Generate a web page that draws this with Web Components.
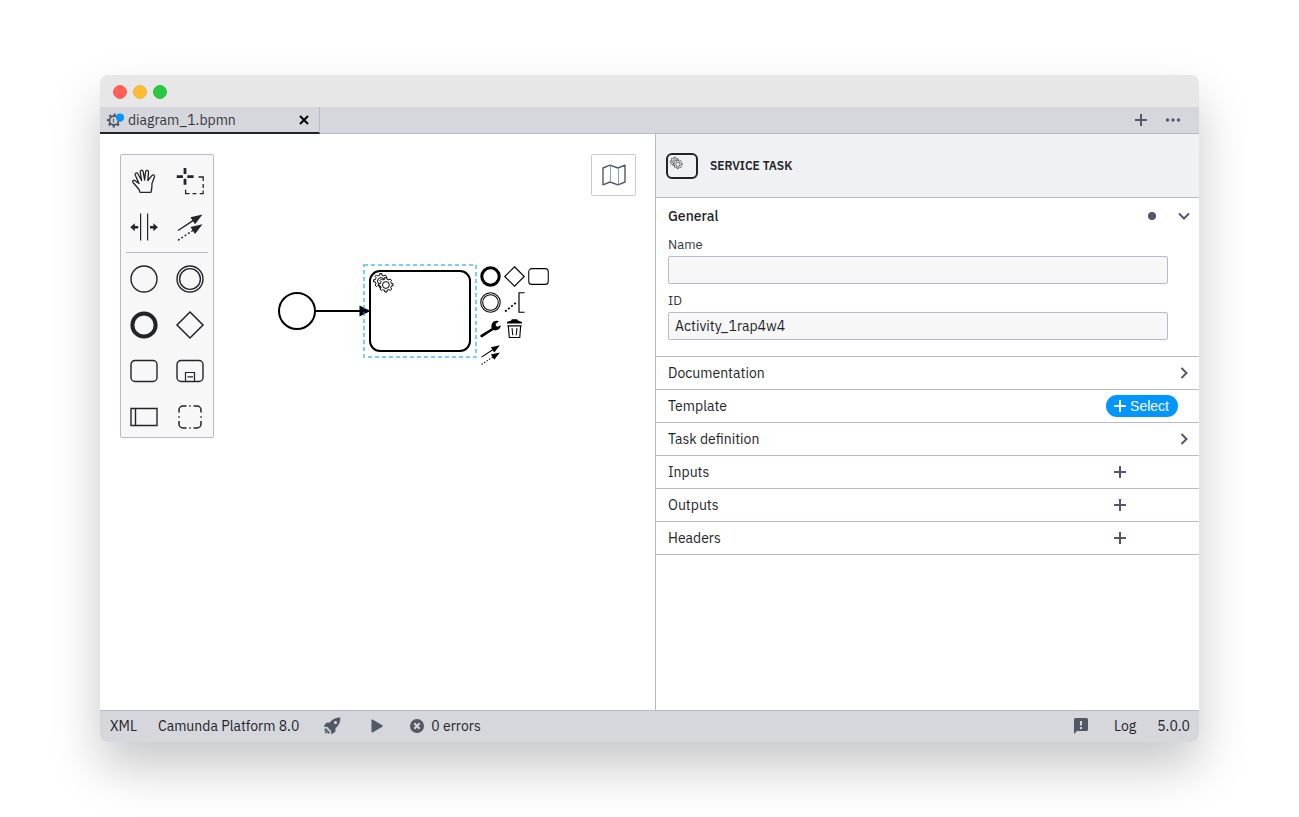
<!DOCTYPE html>
<html lang="en">
<head>
<meta charset="utf-8">
<title>Camunda Modeler</title>
<style>
  body { margin: 0; background: #fff; font: 14px/20px "IBM Plex Sans", Roboto, "Liberation Sans", sans-serif; color: #22242a; }
</style>
</head>
<body>
<modeler-window></modeler-window>

<script>
const GEAR = 'v-1.713c.352-.07.704-.178 1.048-.321.344-.145.666-.322.966-.522l1.194 1.18 1.568-1.577-1.195-1.18c.403-.614.683-1.299.825-2.018l1.622-.01v-2.22l-1.636.01c-.073-.351-.178-.7-.324-1.044-.145-.344-.321-.664-.522-.962l1.131-1.136-1.584-1.563-1.129 1.136c-.614-.401-1.303-.681-2.023-.822l.009-1.619h-2.241l.004 1.631c-.354.074-.705.18-1.05.324-.344.144-.665.321-.963.52l-1.17-1.158-1.567 1.579 1.169 1.157c-.403.613-.683 1.298-.825 2.017l-1.659.003v2.222l1.673-.006c.073.351.18.702.324 1.045.145.344.321.664.523.96l-1.2 1.198 1.584 1.56 1.197-1.194c.614.404 1.303.683 2.023.824l.001 1.699h2.227z';
const GEARS = `<g fill="var(--gear-fill,#fff)" stroke="currentColor"><path d="M12 18${GEAR}"/><circle cx="10.900" cy="11" r="3.400"/><path d="M17 22${GEAR}"/><circle cx="15.900" cy="15" r="3.400"/></g>`;
const line = (w, d, extra = '') => `<path fill="none" stroke="currentColor" stroke-width="${w}" ${extra} d="${d}"/>`;

/* name: [width, height, drawing] */
const ICONS = {
  hand: [28, 28, `<g transform="translate(2 2)">${line(1.3, 'M8 23.400L7 20.500C5 18 3 15.500 1 13.500C0 12 1.500 10.500 3.200 11.800L7 14.500L3.200 6C2.600 4 5 3 6 5L9.600 11.500L8.200 3C8.200 .6 10.800 .4 11.200 2.800L12.600 11L13.600 2.800C14 .6 16.800 1 16.500 3.400L15.800 11.500L19.800 6.600C21 5 23.200 6.200 22.400 8L20 14.500C19.700 18 20.300 19.500 18.800 23.400Z', 'stroke-linejoin="round"')}</g>`],
  lasso: [28, 28, line(2.8, 'M.7 9.700h6.300M11.300 9.700h6.300M9 1v6M9 11.700v6') + line(1.3, 'M22.500 10h4.700v4M27.200 17v4M27.200 23.500v3.200h-3.500M20.500 26.700h-4M13.500 26.700h-3.900v-4')],
  space: [28, 28, line(1.2, 'M10.600 .5v27M17.600 .5v27') + '<path fill="currentColor" d="M.3 14.300l4.500-4v2.700h3.400v2.600H4.800v2.700zM27.900 14.300l-4.500-4v2.700H20v2.600h3.400v2.700z"/>'],
  connect: [28, 28, line(1.4, 'M2 17.500L17 7.700') + line(1.4, 'M2 27.300L18 16.700', 'stroke-dasharray="2 2"') + '<path fill="currentColor" d="M26.500 1.500L14.500 4.200l4.500 7zM26.500 11.300L14.500 14l4.500 7z"/>'],
  start: [28, 28, '<circle cx="14" cy="14" r="13" fill="none" stroke="currentColor" stroke-width="1.400"/>'],
  intermediate: [28, 28, '<g fill="none" stroke="currentColor" stroke-width="1.400"><circle cx="14" cy="14" r="13"/><circle cx="14" cy="14" r="10.400"/></g>'],
  end: [28, 28, '<circle cx="14" cy="14" r="11.600" fill="none" stroke="currentColor" stroke-width="4"/>'],
  gateway: [28, 28, line(1.5, 'M14 1L27 14L14 27L1 14Z')],
  task: [28, 28, line(1.4, 'M5 3.500h18a4 4 0 0 1 4 4v13a4 4 0 0 1-4 4H5a4 4 0 0 1-4-4v-13a4 4 0 0 1 4-4z')],
  subprocess: [28, 28, line(1.4, 'M5 3.500h18a4 4 0 0 1 4 4v13a4 4 0 0 1-4 4H5a4 4 0 0 1-4-4v-13a4 4 0 0 1 4-4z') + line(1.2, 'M9.500 24.500v-9h9v9M11.500 19.800h5.500')],
  pool: [28, 28, line(1.4, 'M1 5.500h26v17H1zM5.500 5.500v17')],
  group: [28, 28, line(1.5, 'M3 9.500V7a4 4 0 0 1 4-4h3.500M17.500 3H21a4 4 0 0 1 4 4v2.500M25 18v3a4 4 0 0 1-4 4h-3.500M10.500 25H7a4 4 0 0 1-4-4v-3M13.300 3h1.400M13.300 25h1.400M3 13.300v1.400M25 13.300v1.400')],
  annotation: [28, 28, line(1.6, 'M27.500 1H20V27H27.500') + line(2.4, 'M1.500 26L17 13.500', 'stroke-dasharray="2.600 2.600"')],
  wrench: [28, 28, '<path fill="currentColor" d="M.8 22.800L15.500 13.500C14.200 8 17.500 3 23 3.600L25 4.500L21 7.500L21.200 10.500L23.800 11.800L27.800 9.500C27.600 14.300 22.500 17.300 17.800 15.900L3 25.700C1 26.500-.4 24.200 .8 22.800Z"/>'],
  trash: [28, 28, '<path fill="currentColor" d="M4 7.200V5.400L9.500 3.200l1-1.700h7l1 1.700L24 5.400v1.800z"/>' + line(1.5, 'M5.800 10.500L7 26h14l1.200-15.500M4.500 10.500h19') + line(1.400, 'M10.700 13.500l1 9.500M17.300 13.500l-1 9.500')],
  map: [24, 22, line(1.4, 'M1 4L8 1.200L16 4L23 1.200V18L16 20.800L8 18L1 20.800Z', 'stroke-linejoin="round"') + '<path stroke="#7da3bd" d="M8.500 1.500V18M16.500 4V20.500"/>'],
  serviceTask: [32, 28, '<rect x="1" y="2" width="30" height="24" rx="5" fill="none" stroke="currentColor" stroke-width="2"/><g transform="translate(2 3) scale(.62)">' + GEARS + '</g>'],
  plus: [12, 12, line(2, 'M6 0v12M0 6h12')],
  dots: [14, 4, '<g fill="currentColor"><circle cx="1.500" cy="2" r="1.700"/><circle cx="7" cy="2" r="1.700"/><circle cx="12.500" cy="2" r="1.700"/></g>'],
  close: [10, 10, line(2, 'M1 1l8 8M9 1l-8 8')],
  down: [12, 12, line(2, 'M1 3.500L6 8.500L11 3.500')],
  right: [12, 12, line(2, 'M3.500 1L8.500 6L3.500 11')],
  tabGear: [18, 16, '<circle cx="7" cy="8.500" r="4.500" fill="none" stroke="#515866" stroke-width="1.800"/><circle cx="7" cy="8.500" r="6" fill="none" stroke="#515866" stroke-width="2.200" stroke-dasharray="2.200 2.512" stroke-dashoffset="1.100"/><path d="M6.500 6.500v4" stroke="#515866" stroke-width="1.200"/><circle cx="13" cy="5.500" r="4" fill="#0095ff"/>'],
  rocket: [18, 18, '<path fill="currentColor" fill-rule="evenodd" d="M17.400 .6C12.500 .6 9.300 2.200 6.800 5.400L3.200 5.700L.6 9.600L4.300 10L8 13.700L8.400 17.400L12.300 14.800L12.600 11.200C15.800 8.700 17.400 5.500 17.400 .6ZM12.500 3.900a1.600 1.600 0 1 1 0 3.200a1.600 1.600 0 0 1 0-3.200z"/>' + line(1.6, 'M3.600 11.600L1.600 13.600M5.100 13.100L2.200 16M6.500 14.600L4.700 16.400')],
  play: [12, 14, '<path fill="currentColor" d="M.5 1.200Q.5 0 1.600 .6L11.300 6.300Q12 7 11.300 7.700L1.600 13.400Q.5 14 .5 12.800Z"/>'],
  error: [14, 14, '<circle cx="7" cy="7" r="7" fill="currentColor"/><path d="M4.300 4.300l5.400 5.400M9.700 4.300l-5.400 5.400" stroke="#d5d7dd" stroke-width="2"/>'],
  feedback: [14, 16, '<path fill="currentColor" fill-rule="evenodd" d="M1.500 0h11A1.500 1.500 0 0 1 14 1.500v10a1.500 1.500 0 0 1-1.500 1.500H3L0 16V1.500A1.500 1.500 0 0 1 1.500 0zM6 3v4.500h2V3zM6 9v2h2V9z"/>']
};

function define(name, markup, setup) {
  const template = document.createElement('template');
  template.innerHTML = markup;
  customElements.define(name, class extends HTMLElement {
    constructor() {
      super();
      this.attachShadow({ mode: 'open' }).append(template.content.cloneNode(true));
    }
    connectedCallback() { if (setup) setup(this, this.shadowRoot); }
  });
}

define('bp-icon', `<style>:host{display:inline-flex;flex:none}svg{display:block;overflow:visible}</style><span></span>`, (el, root) => {
  const [w, h, art] = ICONS[el.getAttribute('name')];
  const size = Number(el.getAttribute('size')) || w;
  root.querySelector('span').innerHTML = `<svg width="${size}" height="${size * h / w}" viewBox="0 0 ${w} ${h}" aria-hidden="true">${art}</svg>`;
});

define('icon-button', `<style>
  :host{display:inline-flex;flex:none}
  button{all:unset;box-sizing:border-box;display:flex;align-items:center;justify-content:center;width:100%;height:100%;cursor:pointer}
</style><button type="button"></button>`, (el, root) => {
  const icon = document.createElement('bp-icon');
  icon.setAttribute('name', el.getAttribute('icon'));
  if (el.hasAttribute('size')) icon.setAttribute('size', el.getAttribute('size'));
  root.querySelector('button').setAttribute('aria-label', el.getAttribute('label'));
  root.querySelector('button').replaceChildren(icon);
});

define('title-bar', `<style>
  :host{display:flex;align-items:center;gap:6px;height:32px;padding:2px 13px 0;box-sizing:border-box;background:#e7e7e7}
  i{width:14px;height:14px;box-sizing:border-box;border-radius:50%;border:1px solid #f0655c;background:#ff5f57}
  i:nth-of-type(2){background:#febc2e;border-color:#eeb04a}
  i:nth-of-type(3){background:#28c840;border-color:#2fbd45}
</style><i></i><i></i><i></i>`);

define('tab-bar', `<style>
  :host{display:flex;height:27px;box-sizing:border-box;background:#d5d7dd;border-bottom:1px solid #b9bac9;color:#515866}
  .tab{display:flex;align-items:center;gap:3px;width:220px;height:27px;box-sizing:border-box;padding:0 10px 0 7px;border-right:1px solid #b9bac9;border-bottom:2px solid #22242a;color:#35373e}
  .tab span{flex:1}
  .tab icon-button{color:#000}
  .actions{display:flex;align-items:center;gap:19px;margin-left:auto;padding-right:19px}
</style>
<div class="tab"><bp-icon name="tabGear"></bp-icon><span>diagram_1.bpmn</span><icon-button icon="close" label="Close tab"></icon-button></div>
<div class="actions"><icon-button icon="plus" label="New diagram"></icon-button><icon-button icon="dots" label="More tabs"></icon-button></div>`);

define('tool-palette', `<style>
  :host{display:grid;grid-template-columns:46px 46px;grid-template-rows:46px 46px 6px;grid-auto-rows:46px;width:92px;background:#f7f7f8;border:1px solid #b9bac9;border-radius:2px;color:#22242a}
  icon-button{padding-top:6px;box-sizing:border-box}
  hr{grid-column:1/-1;width:82px;height:1px;margin:5px 5px 0;border:0;background:#b9bac9}
</style>
<icon-button icon="hand" label="Hand tool"></icon-button><icon-button icon="lasso" label="Lasso tool"></icon-button>
<icon-button icon="space" label="Space tool"></icon-button><icon-button icon="connect" label="Connect tool"></icon-button>
<hr>
<icon-button icon="start" label="Start event"></icon-button><icon-button icon="intermediate" label="Intermediate event"></icon-button>
<icon-button icon="end" label="End event"></icon-button><icon-button icon="gateway" label="Gateway"></icon-button>
<icon-button icon="task" label="Task"></icon-button><icon-button icon="subprocess" label="Sub process"></icon-button>
<icon-button icon="pool" label="Pool"></icon-button><icon-button icon="group" label="Group"></icon-button>`);

define('context-pad', `<style>
  :host{display:grid;grid-template-columns:repeat(3,24px);grid-auto-rows:26px;color:#000}
  icon-button:nth-of-type(4),icon-button:nth-of-type(6),icon-button:nth-of-type(8){grid-column:1}
</style>
<icon-button icon="end" size="21" label="Append end event"></icon-button><icon-button icon="gateway" size="21" label="Append gateway"></icon-button><icon-button icon="task" size="21" label="Append task"></icon-button>
<icon-button icon="intermediate" size="21" label="Append intermediate event"></icon-button><icon-button icon="annotation" size="21" label="Append annotation"></icon-button>
<icon-button icon="wrench" size="21" label="Change type"></icon-button><icon-button icon="trash" size="21" label="Remove"></icon-button>
<icon-button icon="connect" size="21" label="Connect"></icon-button>`);

define('diagram-canvas', `<style>
  :host{display:flex;justify-content:space-between;align-items:flex-start;position:relative;padding:20px 19px 20px 20px;box-sizing:border-box;background:#fff;overflow:hidden}
  .diagram{position:absolute;left:170px;top:120px}
  context-pad{position:absolute;left:378px;top:129px}
  .minimap{width:45px;height:42px;box-sizing:border-box;border:1px solid #ccc;border-radius:2px;background:#fff;color:#515866}
</style>
<tool-palette></tool-palette>
<svg class="diagram" width="220" height="120" viewBox="270 254 220 120">
  <circle cx="297" cy="311" r="18" fill="#fff" stroke="#000" stroke-width="2"/>
  <path d="M315 311h46" stroke="#000" stroke-width="2"/>
  <rect x="370" y="271" width="100" height="80" rx="10" fill="#fff" stroke="#000" stroke-width="2"/>
  <path d="M359.500 305.500v11l11-5.500z"/>
  <g transform="translate(370 270)" color="#000">${GEARS}</g>
  <rect x="364" y="265" width="112" height="92" fill="none" stroke="#0095ff" stroke-opacity=".5" stroke-width="2" stroke-dasharray="4 3"/>
</svg>
<context-pad></context-pad>
<icon-button class="minimap" icon="map" label="Toggle minimap"></icon-button>`);

define('text-field', `<style>
  :host{display:block}
  label{display:block;font-size:13px;line-height:22px;color:#35373e}
  input{display:block;width:100%;height:28px;box-sizing:border-box;padding:0 6px;border:1px solid #b9bac9;border-radius:2px;background:#f7f7f8;font:inherit;color:#22242a}
</style><label for="field"></label><input id="field" type="text">`, (el, root) => {
  root.querySelector('label').textContent = el.getAttribute('label');
  root.querySelector('input').value = el.getAttribute('value') || '';
});

define('panel-group', `<style>
  :host{display:block;border-bottom:1px solid #b9bac9}
  header{display:flex;align-items:center;height:32px;padding:0 9px 0 12px;color:#515866}
  h2{flex:1;margin:0;font-size:14px;font-weight:400;color:#22242a}
  :host([open]) header{height:36px}
  :host([open]) h2{font-weight:500}
  ::slotted(text-field){margin:0 31px 6px 12px}
  ::slotted(text-field:last-of-type){margin-bottom:16px}
</style><header><h2></h2><slot name="actions"></slot></header><slot></slot>`, (el, root) => {
  root.querySelector('h2').textContent = el.getAttribute('label');
});

define('select-button', `<style>
  :host{display:block}
  button{display:flex;align-items:center;gap:4px;height:22px;padding:0 9px 0 8px;border:0;border-radius:11px;background:#0095ff;color:#fff;font:14px/22px "Liberation Sans",sans-serif;cursor:pointer}
</style><button type="button"><bp-icon name="plus"></bp-icon><slot></slot></button>`);

define('properties-panel', `<style>
  :host{display:block;box-sizing:border-box;border-left:1px solid #b9bac9;background:#fff;overflow:hidden}
  .head{display:flex;align-items:center;gap:12px;height:64px;box-sizing:border-box;padding:0 10px;border-bottom:1px solid #b9bac9;background:#f0f1f3;--gear-fill:#f0f1f3}
  h1{margin:0;font-size:12px;font-weight:600}
  .dot{width:8px;height:8px;margin-right:22px;border-radius:50%;background:#515866}
  .add{width:12px;margin-right:64px}
  select-button{margin-right:12px}
</style>
<div class="head"><bp-icon name="serviceTask"></bp-icon><h1>SERVICE TASK</h1></div>
<panel-group label="General" open>
  <span class="dot" slot="actions"></span><icon-button slot="actions" icon="down" label="Collapse General"></icon-button>
  <text-field label="Name"></text-field><text-field label="ID" value="Activity_1rap4w4"></text-field>
</panel-group>
<panel-group label="Documentation"><icon-button slot="actions" icon="right" label="Expand Documentation"></icon-button></panel-group>
<panel-group label="Template"><select-button slot="actions">Select</select-button></panel-group>
<panel-group label="Task definition"><icon-button slot="actions" icon="right" label="Expand Task definition"></icon-button></panel-group>
<panel-group label="Inputs"><icon-button class="add" slot="actions" icon="plus" label="Add input"></icon-button></panel-group>
<panel-group label="Outputs"><icon-button class="add" slot="actions" icon="plus" label="Add output"></icon-button></panel-group>
<panel-group label="Headers"><icon-button class="add" slot="actions" icon="plus" label="Add header"></icon-button></panel-group>`);

define('status-bar', `<style>
  :host{display:flex;align-items:center;height:32px;box-sizing:border-box;padding:0 9px 2px 10px;border-top:1px solid #b9bac9;background:#d5d7dd;color:#515866}
  button{all:unset;display:flex;align-items:center;gap:7px;cursor:pointer}
  .text{color:#22242a}
  .left,.right{display:flex;align-items:center;gap:21px}
  .left icon-button{margin-left:3px}
  .right{margin-left:auto}
  .play{padding:0 6px}
  .right icon-button{margin-right:5px}
  b{font-weight:400;color:#22242a}
</style>
<div class="left"><button class="text" type="button">XML</button><button class="text" type="button">Camunda Platform 8.0</button>
<icon-button icon="rocket" label="Deploy"></icon-button><icon-button class="play" icon="play" label="Run"></icon-button>
<button type="button"><bp-icon name="error"></bp-icon><b>0 errors</b></button></div>
<div class="right"><icon-button icon="feedback" label="Feedback"></icon-button><button class="text" type="button">Log</button><button class="text" type="button">5.0.0</button></div>`);

define('modeler-window', `<style>
  :host{display:flex;flex-direction:column;min-height:calc(100vh - 150px);margin:75px 100px;border-radius:8px;overflow:hidden;box-shadow:0 25px 50px rgba(0,0,0,.22)}
  main{flex:1;display:grid;grid-template-columns:minmax(0,555fr) minmax(0,544fr)}
</style><title-bar></title-bar><tab-bar></tab-bar><main><diagram-canvas></diagram-canvas><properties-panel></properties-panel></main><status-bar></status-bar>`);
</script>
</body>
</html>
